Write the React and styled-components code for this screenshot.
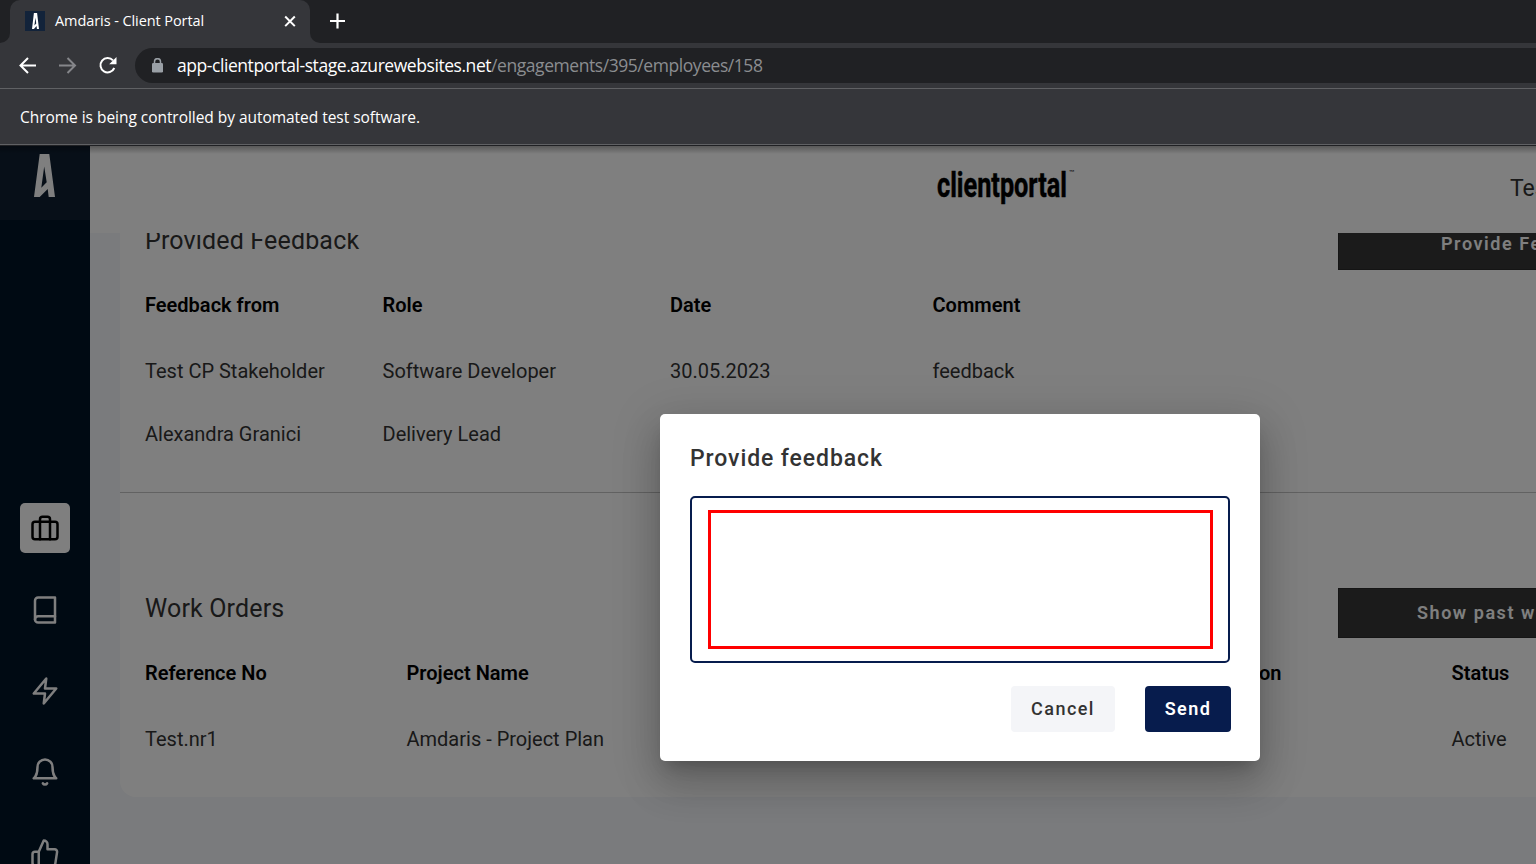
import React from "react";
import styled, { createGlobalStyle } from "styled-components";

const Global = createGlobalStyle`
  *, *::before, *::after { box-sizing: border-box; }
  html, body { margin: 0; padding: 0; }
  body { width: 100vw; height: 100vh; overflow: hidden; font-family: Roboto, "Liberation Sans", sans-serif; }
  svg { flex: none; }
`;

const uiFont = `"Open Sans", "Noto Sans", sans-serif`;

const Window = styled.div`
  display: flex;
  flex-direction: column;
  width: 1536px;
  height: 864px;
  overflow: hidden;
`;

/* Browser chrome */
const TabStrip = styled.div`
  display: flex;
  align-items: flex-end;
  height: 43px;
  background: #202124;
  flex: none;
`;
const StripCorner = styled.div`
  width: 10px;
  height: 43px;
  background: #35363a;
  flex: none;
  &::before {
    content: "";
    display: block;
    height: 43px;
    background: #202124;
    border-bottom-right-radius: 10px;
  }
`;
const StripTail = styled.div`
  flex: 1;
  height: 43px;
  background: #35363a;
`;
const StripTailInner = styled.div`
  display: flex;
  align-items: center;
  height: 43px;
  padding: 0 0 1px 19px;
  background: #202124;
  border-bottom-left-radius: 10px;
`;
const Tab = styled.div`
  display: flex;
  align-items: center;
  width: 300px;
  height: 43px;
  padding: 0 13px 1px 15px;
  background: #35363a;
  border-radius: 10px 10px 0 0;
  flex: none;
`;
const Favicon = styled.div`
  display: flex;
  align-items: center;
  justify-content: center;
  width: 20px;
  height: 20px;
  background: #12233a;
`;
const TabTitle = styled.span`
  flex: 1;
  margin-left: 10px;
  font: 400 14.5px/20px ${uiFont};
  letter-spacing: -0.08px;
  color: #fff;
  white-space: nowrap;
`;
const Toolbar = styled.div`
  display: flex;
  align-items: center;
  height: 45px;
  padding-left: 18px;
  background: #35363a;
  flex: none;
`;
const NavButton = styled.div`
  display: flex;
  width: 20px;
  margin-right: ${(p) => p.$gap || 20}px;
  color: ${(p) => (p.$dim ? "#85868a" : "#fff")};
`;
const AddressBar = styled.div`
  display: flex;
  align-items: center;
  flex: 1;
  height: 35px;
  padding-left: 16px;
  background: #202124;
  border-radius: 18px 0 0 18px;
`;
const Url = styled.span`
  margin-left: 14px;
  padding-bottom: 2px;
  font: 400 17.5px/24px ${uiFont};
  letter-spacing: -0.44px;
  color: #fff;
  white-space: nowrap;
`;
const UrlPath = styled.span`
  color: #8b8d90;
`;
const InfoBar = styled.div`
  display: flex;
  align-items: center;
  height: 58px;
  padding: 0 20px;
  background: #35363a;
  border-top: 1px solid #606164;
  border-bottom: 1px solid #202124;
  box-shadow: inset 0 -1px 0 #606164;
  font: 400 15.5px/20px ${uiFont};
  letter-spacing: -0.04px;
  color: #fff;
  flex: none;
`;

/* Portal */
const Viewport = styled.div`
  position: relative;
  display: flex;
  flex: 1;
  min-height: 0;
  overflow: hidden;
`;
const Sidebar = styled.nav`
  display: flex;
  flex-direction: column;
  width: 90px;
  background: #001427;
  flex: none;
`;
const Brand = styled.div`
  display: flex;
  justify-content: center;
  height: 74px;
  padding: 8px 1px 0 0;
  background: #0f1f30;
  flex: none;
`;
const NavList = styled.div`
  display: flex;
  flex-direction: column;
  align-items: center;
  gap: 31px;
  padding-top: 283px;
`;
const NavItem = styled.div`
  display: flex;
  align-items: center;
  justify-content: center;
  width: 50px;
  height: 50px;
  margin-bottom: ${(p) => (p.$active ? 1 : 0)}px;
  border-radius: 5px;
  background: ${(p) => (p.$active ? "#fff" : "transparent")};
  color: ${(p) => (p.$active ? "#000" : "#fff")};
  flex: none;
`;
const Main = styled.div`
  display: flex;
  flex-direction: column;
  flex: 1;
  min-width: 0;
  background: #f5f7fa;
`;
const Header = styled.header`
  display: flex;
  align-items: flex-start;
  height: 87px;
  padding: 20px 0 0 843px;
  background: #fff;
  overflow: hidden;
  flex: none;
`;
const UserName = styled.span`
  margin: 8px 0 0 432px;
  font-size: 23px;
  line-height: 29px;
  color: #333;
  white-space: nowrap;
  flex: none;
`;
const Card = styled.section`
  height: 564px;
  margin-left: 30px;
  background: #fff;
  border-bottom-left-radius: 16px;
  overflow: hidden;
  flex: none;
`;
const Section = styled.div`
  display: flow-root;
  height: ${(p) => p.$height}px;
  padding: ${(p) => p.$top || 0}px 0 0 25px;
  border-bottom: ${(p) => (p.$ruled ? "1px solid #c4c4c4" : "none")};
`;
const SectionHead = styled.div`
  display: flex;
  align-items: center;
  height: 50px;
  margin-top: ${(p) => (p.$scrolled ? -13 : 0)}px;
`;
const Title = styled.h2`
  width: 1193px;
  margin: 0;
  padding-bottom: 8px;
  font-size: 25px;
  font-weight: 400;
  line-height: 30px;
  letter-spacing: 0.16px;
  color: #333;
  flex: none;
`;
const DarkButton = styled.div`
  display: flex;
  align-items: center;
  height: 50px;
  width: 380px;
  padding: 0 0 ${(p) => p.$lift || 2}px ${(p) => p.$inset}px;
  background: #373737;
  border: 1px solid #2a2a2a;
  color: #fff;
  font-size: 18px;
  font-weight: 600;
  letter-spacing: 1.55px;
  white-space: nowrap;
  flex: none;
`;
const Row = styled.div`
  display: grid;
  grid-template-columns: ${(p) => p.$columns};
  align-items: center;
  height: 24px;
  margin-top: ${(p) => p.$gap}px;
  font-size: 20px;
  font-weight: ${(p) => (p.$head ? 600 : 400)};
  letter-spacing: ${(p) => (p.$head ? 0.01 : 0)}px;
  color: ${(p) => (p.$head ? "#000" : "#333")};
  white-space: nowrap;
`;

/* Dialog */
const Backdrop = styled.div`
  position: absolute;
  inset: 0;
  background: rgba(0, 0, 0, 0.5);
  &::before {
    content: "";
    display: block;
    height: 8px;
    background: linear-gradient(rgba(0, 0, 0, 0.3), rgba(0, 0, 0, 0));
  }
`;
const Dialog = styled.div`
  position: absolute;
  left: 660px;
  top: 268px;
  display: flex;
  flex-direction: column;
  width: 600px;
  height: 347px;
  padding: 31px 29px 29px 30px;
  background: #fff;
  border-radius: 5px;
  box-shadow: 0 11px 15px -7px rgba(0, 0, 0, 0.2), 0 24px 38px 3px rgba(0, 0, 0, 0.14), 0 9px 46px 8px rgba(0, 0, 0, 0.12);
`;
const DialogTitle = styled.h3`
  margin: 0 0 23px;
  font-size: 23px;
  font-weight: 500;
  line-height: 28px;
  letter-spacing: 0.9px;
  color: #333;
`;
const Field = styled.div`
  width: 540px;
  height: 167px;
  padding: 12px 15px 12px 16px;
  border: 2px solid #071c4d;
  border-radius: 5px;
`;
const Highlight = styled.div`
  height: 139px;
  border: 3px solid #f00;
`;
const Actions = styled.div`
  display: flex;
  justify-content: flex-end;
  gap: 30px;
  margin-top: 23px;
`;
const Action = styled.div`
  display: flex;
  align-items: center;
  justify-content: center;
  width: ${(p) => (p.$primary ? 86 : 104)}px;
  height: 46px;
  padding-bottom: 2px;
  border-radius: 4px;
  background: ${(p) => (p.$primary ? "#071c4d" : "#f4f5f8")};
  color: ${(p) => (p.$primary ? "#fff" : "#333")};
  font-size: 18px;
  font-weight: ${(p) => (p.$primary ? 600 : 500)};
  letter-spacing: 1.45px;
`;

const Mark = ({ width, height, color }) => (
  <svg width={width} height={height} viewBox="0 0 21 43" preserveAspectRatio="none">
    <path fill={color} fillRule="evenodd" d="M5.700 0h9.600L21 43h-6.300l-1-8-8 8H0zM10.200 12.500L7.300 33.700l5.400-5.400z" />
  </svg>
);

const Icon = ({ children }) => (
  <svg width="30" height="30" viewBox="0 0 24 24" fill="none" stroke="currentColor" strokeWidth="2" strokeLinecap="round" strokeLinejoin="round">
    {children}
  </svg>
);

const NavGlyph = ({ children }) => (
  <svg width="20" height="20" viewBox="0 0 20 20" fill="none" stroke="currentColor" strokeWidth="2">
    {children}
  </svg>
);

const feedbackCols = "237.5px 287.5px 262.5px 1fr";
const orderCols = "261.5px 852.5px 192.500px 1fr";

export default function App() {
  return (
    <Window>
      <Global />
      <TabStrip>
        <StripCorner />
        <Tab>
          <Favicon><Mark width={7} height={16} color="#fff" /></Favicon>
          <TabTitle>Amdaris - Client Portal</TabTitle>
          <svg width="14" height="14" viewBox="0 0 14 14" stroke="#fff" strokeWidth="2">
            <path d="M2.200 2.500l9.600 9.600M11.800 2.500L2.200 12.100" />
          </svg>
        </Tab>
        <StripTail>
          <StripTailInner>
            <svg width="16" height="16" viewBox="0 0 16 16" stroke="#fff" strokeWidth="2.2">
              <path d="M8.500 .5v15M1 8h15" />
            </svg>
          </StripTailInner>
        </StripTail>
      </TabStrip>
      <Toolbar>
        <NavButton><NavGlyph><path d="M18 9.500H3M10 2L2.500 9.500l7.500 7.500" /></NavGlyph></NavButton>
        <NavButton $dim><NavGlyph><path d="M1 9.500h15M9.500 2L17 9.500l-7.500 7.500" /></NavGlyph></NavButton>
        <NavButton $gap={17}>
          <NavGlyph>
            <path d="M16.300 12A7.200 7.200 0 1 1 15 4.300" />
            <path d="M18.500 1v7.300h-7.300z" fill="currentColor" stroke="none" />
          </NavGlyph>
        </NavButton>
        <AddressBar>
          <svg width="12" height="15" viewBox="0 0 12 15">
            <rect x="1" y="5" width="11" height="9.500" rx="1.300" fill="#9aa0a6" />
            <path d="M3.500 6V3.700a3 3 0 0 1 6 0V6" fill="none" stroke="#9aa0a6" strokeWidth="1.500" />
          </svg>
          <Url>app-clientportal-stage.azurewebsites.net<UrlPath>/engagements/395/employees/158</UrlPath></Url>
        </AddressBar>
      </Toolbar>
      <InfoBar>Chrome is being controlled by automated test software.</InfoBar>
      <Viewport>
        <Sidebar>
          <Brand><Mark width={21} height={43} color="#fff" /></Brand>
          <NavList>
            <NavItem $active>
              <Icon><rect x="2" y="7" width="20" height="14" rx="2" /><path d="M16 21V5a2 2 0 0 0-2-2h-4a2 2 0 0 0-2 2v16" /></Icon>
            </NavItem>
            <NavItem>
              <Icon><path d="M4 19.500A2.500 2.500 0 0 1 6.500 17H20" /><path d="M6.500 2H20v20H6.500A2.500 2.500 0 0 1 4 19.500v-15A2.500 2.500 0 0 1 6.500 2z" /></Icon>
            </NavItem>
            <NavItem>
              <Icon><path d="M13 2L3 14h9l-1 8 10-12h-9l1-8z" /></Icon>
            </NavItem>
            <NavItem>
              <Icon><path d="M18 8A6 6 0 0 0 6 8c0 7-3 9-3 9h18s-3-2-3-9" /><path d="M13.730 21a2 2 0 0 1-3.460 0" /></Icon>
            </NavItem>
            <NavItem>
              <Icon><path d="M14 9V5a3 3 0 0 0-3-3l-4 9v11h11.280a2 2 0 0 0 2-1.700l1.380-9a2 2 0 0 0-2-2.300zM7 22H4a2 2 0 0 1-2-2v-7a2 2 0 0 1 2-2h3" /></Icon>
            </NavItem>
          </NavList>
        </Sidebar>
        <Main>
          <Header>
            <svg width="145" height="42" viewBox="0 0 145 42" fill="#000" fontFamily="Roboto, sans-serif">
              <text x="4" y="30.500" fontSize="35" fontWeight="700" stroke="#000" strokeWidth="0.500" textLength="130" lengthAdjust="spacingAndGlyphs">clientportal</text>
              <text x="135.500" y="9" fontSize="7" textLength="6" lengthAdjust="spacingAndGlyphs">™</text>
            </svg>
            <UserName>Test</UserName>
          </Header>
          <Card>
            <Section $height={260} $ruled>
              <SectionHead $scrolled>
                <Title>Provided Feedback</Title>
                <DarkButton $inset={102} $lift={4}>Provide Feedback</DarkButton>
              </SectionHead>
              <Row $head $gap={23} $columns={feedbackCols}>
                <span>Feedback from</span><span>Role</span><span>Date</span><span>Comment</span>
              </Row>
              <Row $gap={42} $columns={feedbackCols}>
                <span>Test CP Stakeholder</span><span>Software Developer</span><span>30.05.2023</span><span>feedback</span>
              </Row>
              <Row $gap={39} $columns={feedbackCols}>
                <span>Alexandra Granici</span><span>Delivery Lead</span>
              </Row>
            </Section>
            <Section $height={304} $top={95}>
              <SectionHead>
                <Title>Work Orders</Title>
                <DarkButton $inset={78}>Show past work orders</DarkButton>
              </SectionHead>
              <Row $head $gap={23} $columns={orderCols}>
                <span>Reference No</span><span>Project Name</span><span>on</span><span>Status</span>
              </Row>
              <Row $gap={42} $columns={orderCols}>
                <span>Test.nr1</span><span>Amdaris - Project Plan</span><span /><span>Active</span>
              </Row>
            </Section>
          </Card>
        </Main>
        <Backdrop />
        <Dialog>
          <DialogTitle>Provide feedback</DialogTitle>
          <Field><Highlight /></Field>
          <Actions>
            <Action>Cancel</Action>
            <Action $primary>Send</Action>
          </Actions>
        </Dialog>
      </Viewport>
    </Window>
  );
}
